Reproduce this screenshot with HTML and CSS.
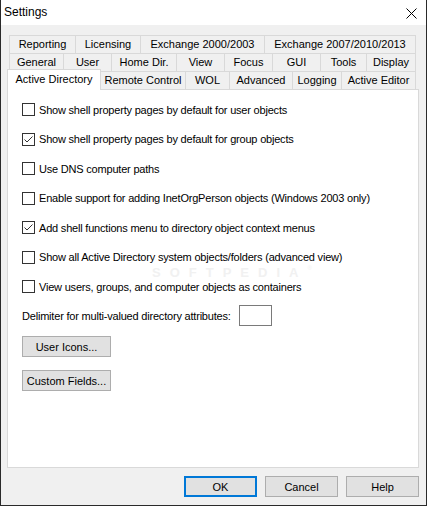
FILE: index.html
```html
<!DOCTYPE html>
<html>
<head>
<meta charset="utf-8">
<title>Settings</title>
<link rel="stylesheet" href="styles.css">
</head>
<body>
<div class="window">
  <div class="titlebar">
    <span class="title">Settings</span>
    <svg class="close" width="11" height="11" viewBox="0 0 11 11"><path d="M0.5 0.5 L10.5 10.5 M10.5 0.5 L0.5 10.5" stroke="#000" stroke-width="1" fill="none"/></svg>
  </div>
  <div class="tabs">
    <div class="tab-row">
      <div class="tab w66">Reporting</div>
      <div class="tab w65">Licensing</div>
      <div class="tab w124">Exchange 2000/2003</div>
      <div class="tab w152 last">Exchange 2007/2010/2013</div>
    </div>
    <div class="tab-row">
      <div class="tab w54">General</div>
      <div class="tab w48">User</div>
      <div class="tab w65">Home Dir.</div>
      <div class="tab w48">View</div>
      <div class="tab w48">Focus</div>
      <div class="tab w48">GUI</div>
      <div class="tab w46">Tools</div>
      <div class="tab w50 last">Display</div>
    </div>
    <div class="tab-row">
      <div class="tab selected">Active Directory</div>
      <div class="tab w85">Remote Control</div>
      <div class="tab w44">WOL</div>
      <div class="tab w63">Advanced</div>
      <div class="tab w49">Logging</div>
      <div class="tab w75 last">Active Editor</div>
    </div>
  </div>
  <div class="panel">
    <span class="watermark">SOFTPEDIA<span class="reg">®</span></span>
    <div class="options">
      <div class="check-row"><span class="box"></span><span class="label">Show shell property pages by default for user objects</span></div>
      <div class="check-row"><span class="box"><svg width="11" height="11" viewBox="0 0 11 11"><path d="M1.5 5.5 L4 8 L9.5 2.5" stroke="#333" stroke-width="1" fill="none"/></svg></span><span class="label">Show shell property pages by default for group objects</span></div>
      <div class="check-row"><span class="box"></span><span class="label">Use DNS computer paths</span></div>
      <div class="check-row"><span class="box"></span><span class="label">Enable support for adding InetOrgPerson objects (Windows 2003 only)</span></div>
      <div class="check-row"><span class="box"><svg width="11" height="11" viewBox="0 0 11 11"><path d="M1.5 5.5 L4 8 L9.5 2.5" stroke="#333" stroke-width="1" fill="none"/></svg></span><span class="label">Add shell functions menu to directory object context menus</span></div>
      <div class="check-row"><span class="box"></span><span class="label">Show all Active Directory system objects/folders (advanced view)</span></div>
      <div class="check-row"><span class="box"></span><span class="label">View users, groups, and computer objects as containers</span></div>
    </div>
    <div class="delim-row">
      <span class="label">Delimiter for multi-valued directory attributes:</span>
      <span class="textbox"></span>
    </div>
    <div class="btn panel-btn first">User Icons...</div>
    <div class="btn panel-btn second">Custom Fields...</div>
  </div>
  <div class="footer">
    <div class="btn dlg-btn default">OK</div>
    <div class="btn dlg-btn">Cancel</div>
    <div class="btn dlg-btn">Help</div>
  </div>
</div>
</body>
</html>
```
FILE: styles.css
```css
html, body {
  margin: 0;
  padding: 0;
  background: #f0f0f0;
}
body {
  font-family: "Liberation Sans", Arial, sans-serif;
  font-size: 11px;
  color: #000;
}
.window {
  width: 427px;
  height: 506px;
  box-sizing: border-box;
  border: 1px solid #2a2a2a;
  border-top: none;
  background: #f0f0f0;
  display: flex;
  flex-direction: column;
  overflow: hidden;
}
.titlebar {
  height: 25px;
  flex: none;
  background: #fff;
  display: flex;
  align-items: center;
  justify-content: space-between;
  padding: 0 9px 0 3px;
}
.title {
  font-size: 12px;
  line-height: 25px;
}
.close {
  display: block;
  margin-top: 1px;
}
.tabs {
  margin: 10px 10px 0 8px;
  flex: none;
}
.tab-row {
  display: flex;
  height: 18px;
}
.tab {
  box-sizing: border-box;
  height: 18px;
  border-top: 1px solid #d9d9d9;
  border-left: 1px solid #d9d9d9;
  background: #f0f0f0;
  text-align: center;
  line-height: 17px;
  white-space: nowrap;
  flex: none;
}
.tab.last {
  border-right: 1px solid #d9d9d9;
}
.tab.selected {
  position: relative;
  z-index: 1;
  width: 94px;
  height: 21px;
  margin: -2px -1px 0 -2px;
  background: #fff;
  border-right: 1px solid #d9d9d9;
  line-height: 18px;
}
.w44 { width: 44px; }
.w46 { width: 46px; }
.w48 { width: 48px; }
.w49 { width: 49px; }
.w50 { width: 50px; }
.w54 { width: 54px; }
.w63 { width: 63px; }
.w65 { width: 65px; }
.w66 { width: 66px; }
.w75 { width: 75px; }
.w85 { width: 85px; }
.w124 { width: 124px; }
.w152 { width: 152px; }
.panel {
  position: relative;
  z-index: 0;
  margin: 0 7px 0 6px;
  height: 379px;
  box-sizing: border-box;
  border: 1px solid #d9d9d9;
  background: #fff;
  padding: 13px 0 0 14px;
  flex: none;
}
.label {
  letter-spacing: -0.2px;
  white-space: nowrap;
}
.options {
  display: flex;
  flex-direction: column;
  gap: 16.5px;
}
.check-row {
  display: flex;
  align-items: center;
  height: 13px;
  gap: 4px;
}
.box {
  width: 13px;
  height: 13px;
  box-sizing: border-box;
  border: 1px solid #333;
  background: #fff;
  flex: none;
  display: flex;
}
.box svg {
  display: block;
}
.delim-row {
  display: flex;
  align-items: center;
  gap: 8px;
  margin-top: 12px;
}
.textbox {
  width: 33px;
  height: 21px;
  box-sizing: border-box;
  border: 1px solid #7a7a7a;
  background: #fff;
}
.btn {
  box-sizing: border-box;
  background: #e1e1e1;
  border: 1px solid #adadad;
  display: flex;
  align-items: center;
  justify-content: center;
  height: 21px;
}
.panel-btn {
  width: 89px;
}
.panel-btn.first {
  margin-top: 10px;
}
.panel-btn.second {
  margin-top: 13px;
}
.footer {
  display: flex;
  justify-content: flex-end;
  gap: 8px;
  margin-top: 8px;
  padding-right: 7px;
  flex: none;
}
.dlg-btn {
  width: 73px;
}
.dlg-btn.default {
  border: 2px solid #0078d7;
}
.watermark {
  position: absolute;
  z-index: -1;
  left: 144px;
  top: 175px;
  display: flex;
  align-items: flex-start;
  font-size: 13px;
  line-height: 15px;
  height: 15px;
  font-weight: bold;
  letter-spacing: 9px;
  color: #f1f1f1;
  white-space: nowrap;
}
.watermark .reg {
  font-size: 6px;
  line-height: 7px;
  letter-spacing: 0;
  font-weight: normal;
}
```
